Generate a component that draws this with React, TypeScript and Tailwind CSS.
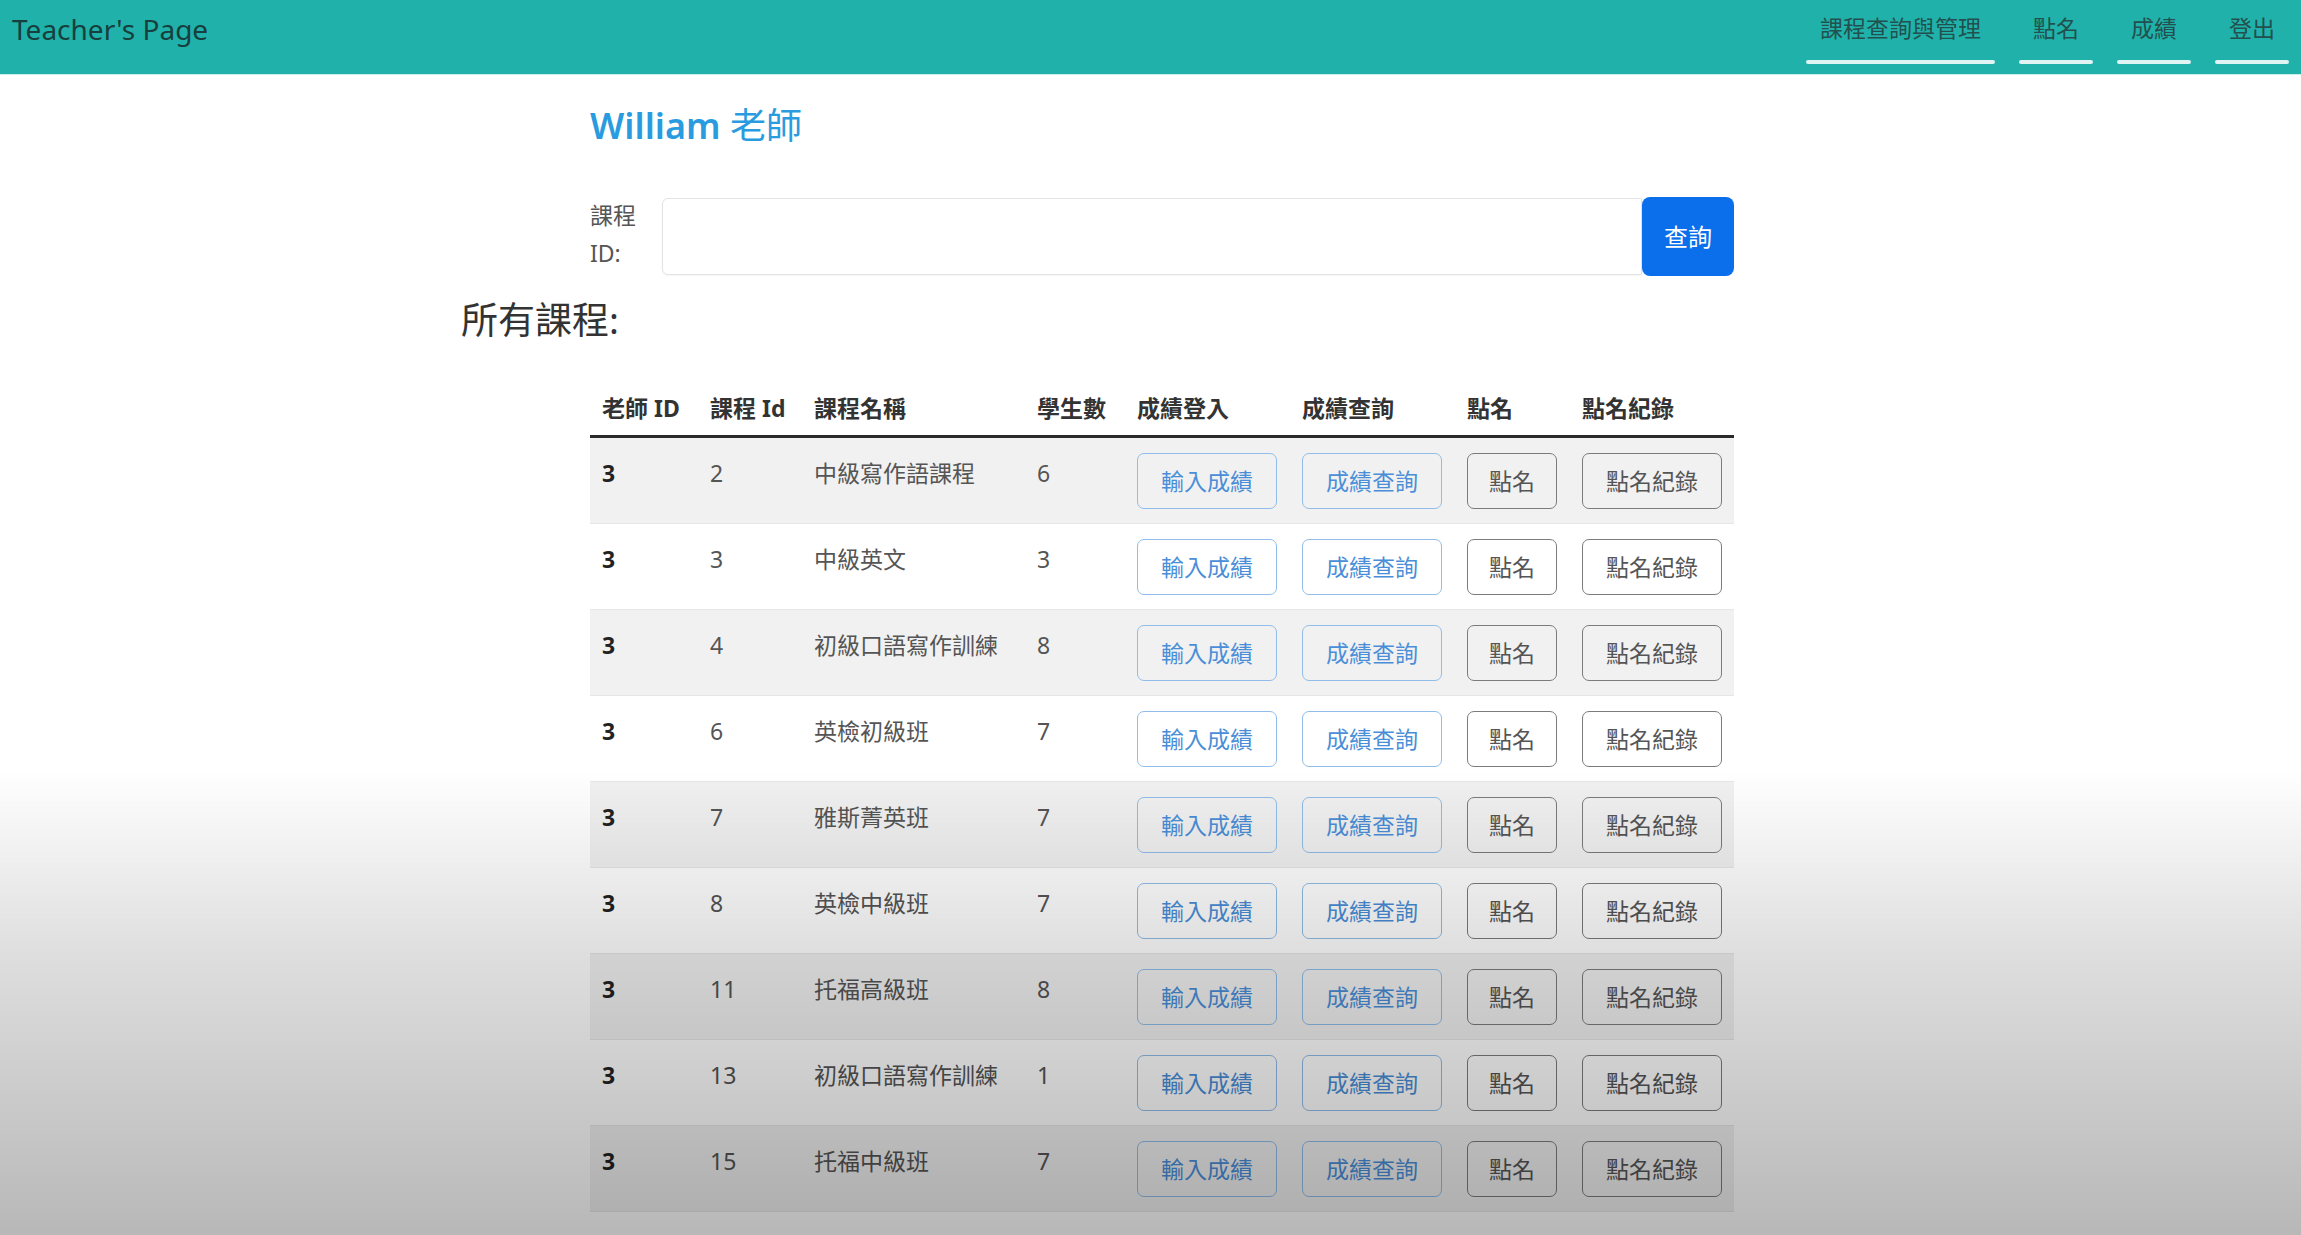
import React from 'react';

interface Course {
  teacherId: number;
  courseId: number;
  name: string;
  students: number;
}

const courses: Course[] = [
  { teacherId: 3, courseId: 2, name: '中級寫作語課程', students: 6 },
  { teacherId: 3, courseId: 3, name: '中級英文', students: 3 },
  { teacherId: 3, courseId: 4, name: '初級口語寫作訓練', students: 8 },
  { teacherId: 3, courseId: 6, name: '英檢初級班', students: 7 },
  { teacherId: 3, courseId: 7, name: '雅斯菁英班', students: 7 },
  { teacherId: 3, courseId: 8, name: '英檢中級班', students: 7 },
  { teacherId: 3, courseId: 11, name: '托福高級班', students: 8 },
  { teacherId: 3, courseId: 13, name: '初級口語寫作訓練', students: 1 },
  { teacherId: 3, courseId: 15, name: '托福中級班', students: 7 },
];

const navItems = ['課程查詢與管理', '點名', '成績', '登出'];

const font = "font-['Noto_Sans','Noto_Sans_CJK_TC',sans-serif]";

export default function App() {
  return (
    <div className={`relative min-h-screen bg-white ${font}`}>
      {/* Navbar */}
      <header className="flex h-[75px] items-start justify-between bg-[#20b2aa] pl-3 pr-3 border-b border-[#c9eeec]">
        <div className="mt-[9px] text-[28px] leading-[40px] text-[#163f3e]">Teacher's Page</div>
        <nav className="flex gap-[24px]">
          {navItems.map((item) => (
            <a key={item} href="#" onClick={(e) => e.preventDefault()} className="flex flex-col items-stretch">
              <span className="mt-[10px] px-[14px] text-[23px] leading-[36px] text-[#22504e]">{item}</span>
              <span className="mt-[14px] h-[4px] rounded-full bg-[#dff4f3]" />
            </a>
          ))}
        </nav>
      </header>

      {/* Content */}
      <main className="pl-[461px]">
        <div className="ml-[129px] w-[1144px]">
          <h4 className="mt-[29px] text-[36px] font-semibold leading-[44px] text-[#2b9be0]">
            William <span className="font-normal">老師</span>
          </h4>

          <div className="mt-[49px] flex items-center">
            <label className="-mt-[6px] w-[72px] text-[23px] leading-[38px] text-[#555]">課程 ID:</label>
            <input
              type="text"
              className="h-[77px] flex-1 rounded-l-[6px] border border-[#e3e3e3] bg-white px-4 text-[23px] shadow-[0_1px_2px_rgba(0,0,0,0.04)] outline-none"
            />
            <button className="h-[79px] w-[92px] rounded-[8px] bg-[#0b6fec] text-[24px] text-white">查詢</button>
          </div>
        </div>

        <h2 className="mt-[19px] text-[37px] leading-[50px] text-[#333]">所有課程:</h2>

        <div className="ml-[129px] mt-[29px] w-[1144px]">
          <table className="w-full table-fixed border-collapse text-left text-[23px]">
            <thead>
              <tr className="border-b-[3px] border-[#2a2a2a]">
                <th className="w-[108px] px-[12px] pt-[16px] pb-[9px] font-bold leading-[36px] text-[#333] whitespace-nowrap">老師 ID</th>
                <th className="w-[104px] px-[12px] pt-[16px] pb-[9px] font-bold leading-[36px] text-[#333] whitespace-nowrap">課程 Id</th>
                <th className="w-[223px] px-[12px] pt-[16px] pb-[9px] font-bold leading-[36px] text-[#333]">課程名稱</th>
                <th className="w-[100px] px-[12px] pt-[16px] pb-[9px] font-bold leading-[36px] text-[#333]">學生數</th>
                <th className="w-[165px] px-[12px] pt-[16px] pb-[9px] font-bold leading-[36px] text-[#333]">成績登入</th>
                <th className="w-[165px] px-[12px] pt-[16px] pb-[9px] font-bold leading-[36px] text-[#333]">成績查詢</th>
                <th className="w-[115px] px-[12px] pt-[16px] pb-[9px] font-bold leading-[36px] text-[#333]">點名</th>
                <th className="w-[164px] px-[12px] pt-[16px] pb-[9px] font-bold leading-[36px] text-[#333]">點名紀錄</th>
              </tr>
            </thead>
            <tbody>
              {courses.map((c, i) => (
                <tr key={c.courseId} className={`border-b border-[#e6e6e6] ${i % 2 === 0 ? 'bg-[#f1f1f1]' : 'bg-white'}`}>
                  <td className="px-[12px] pt-[15px] pb-[14px] align-top font-bold leading-[40px] text-[#222]">{c.teacherId}</td>
                  <td className="px-[12px] pt-[15px] pb-[14px] align-top leading-[40px] text-[#555]">{c.courseId}</td>
                  <td className="px-[12px] pt-[15px] pb-[14px] align-top leading-[40px] text-[#555] whitespace-nowrap">{c.name}</td>
                  <td className="px-[12px] pt-[15px] pb-[14px] align-top leading-[40px] text-[#555]">{c.students}</td>
                  <td className="px-[12px] pt-[15px] pb-[14px] align-top">
                    <button className="h-[56px] whitespace-nowrap rounded-[7px] border border-[#90bde9] px-[23px] text-[23px] text-[#4a8ed8]">輸入成績</button>
                  </td>
                  <td className="px-[12px] pt-[15px] pb-[14px] align-top">
                    <button className="h-[56px] whitespace-nowrap rounded-[7px] border border-[#90bde9] px-[23px] text-[23px] text-[#4a8ed8]">成績查詢</button>
                  </td>
                  <td className="px-[12px] pt-[15px] pb-[14px] align-top">
                    <button className="h-[56px] whitespace-nowrap rounded-[7px] border border-[#7c7c7c] px-[21px] text-[23px] text-[#555]">點名</button>
                  </td>
                  <td className="px-[12px] pt-[15px] pb-[14px] align-top">
                    <button className="h-[56px] whitespace-nowrap rounded-[7px] border border-[#7c7c7c] px-[23px] text-[23px] text-[#555]">點名紀錄</button>
                  </td>
                </tr>
              ))}
            </tbody>
          </table>
        </div>
      </main>

      {/* Dimming fade over the lower half */}
      <div className="pointer-events-none fixed inset-x-0 bottom-0 h-[465px] bg-linear-to-b from-black/0 via-black/13 via-40% to-black/28" />
    </div>
  );
}
